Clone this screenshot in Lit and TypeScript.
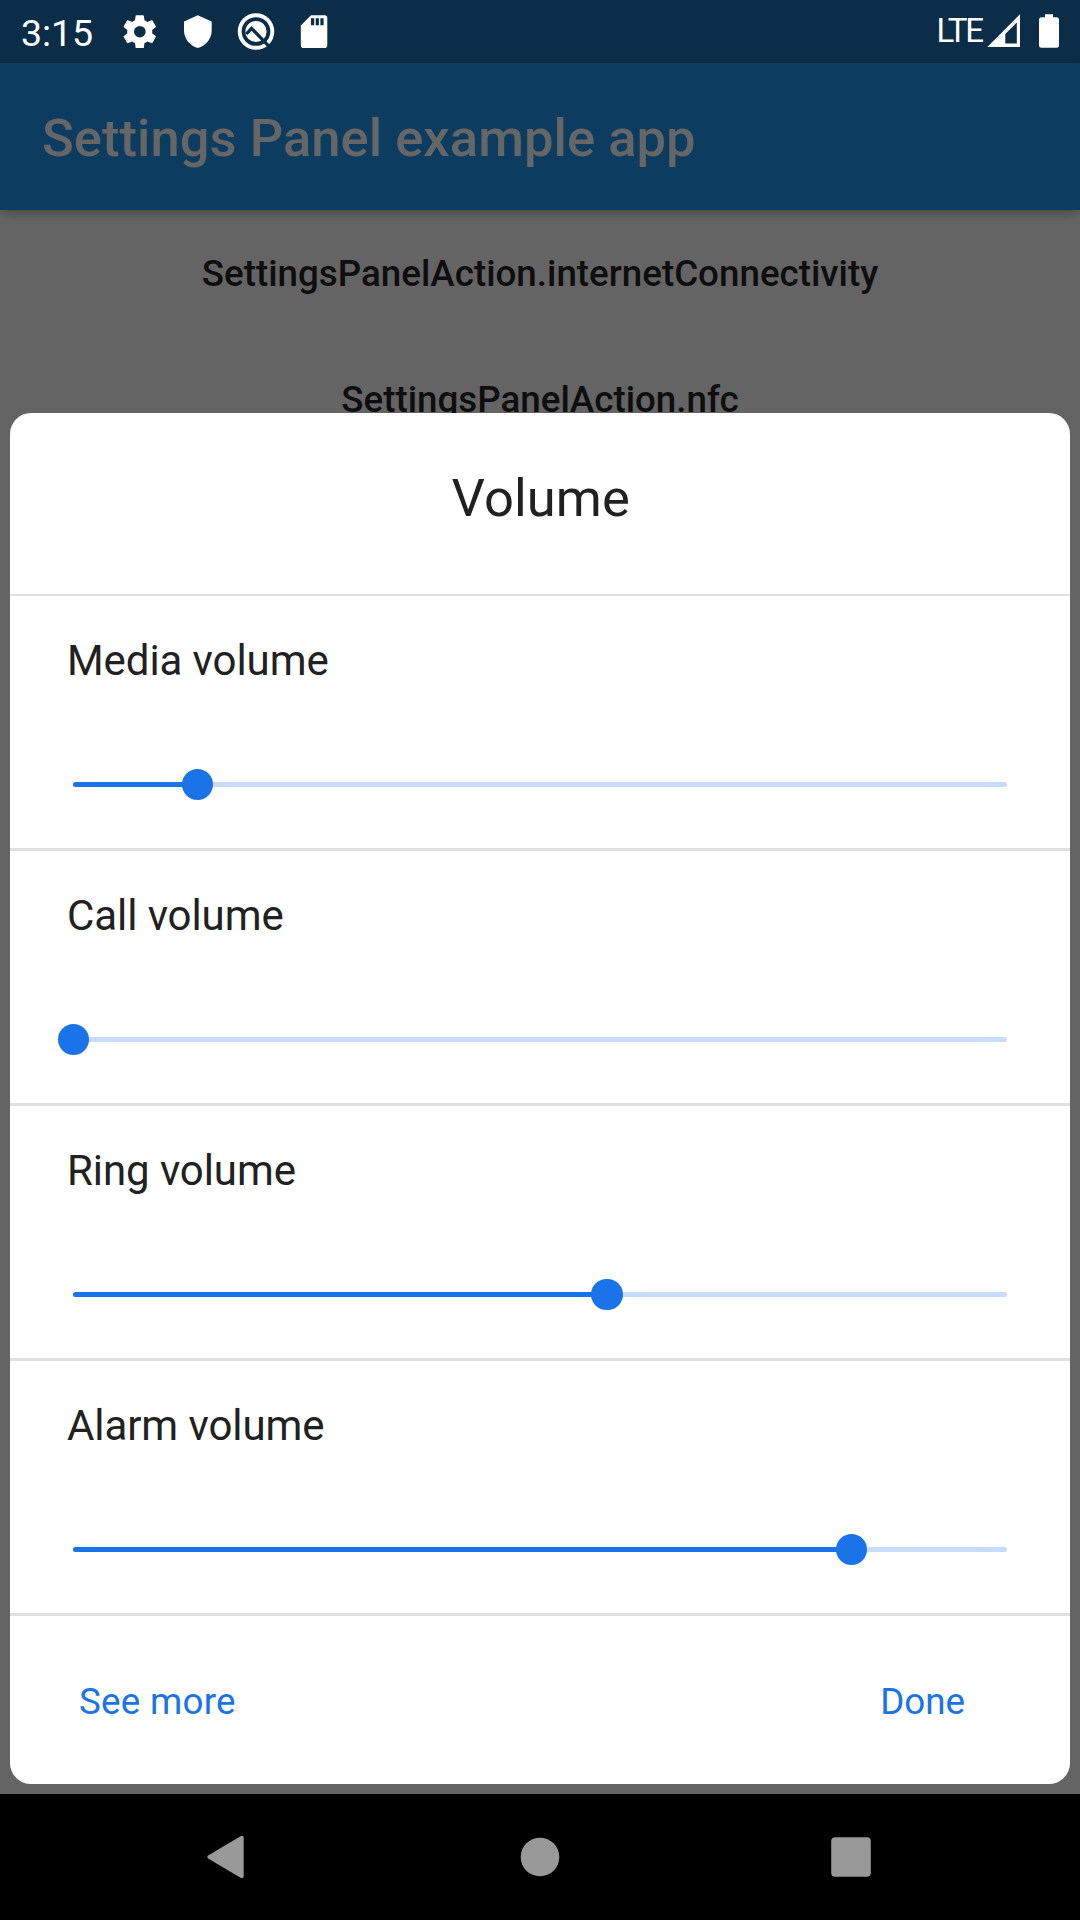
import { LitElement, html, css } from "lit";
import { customElement, property } from "lit/decorators.js";

@customElement("status-bar")
class StatusBar extends LitElement {
  static styles = css`
    :host { display: flex; align-items: flex-start; height: 63px; box-sizing: border-box; background: #0b2d48; color: #fff; }
    .clock { margin-left: 21px; width: 95px; font-size: 37.5px; line-height: 43px; padding-top: 12px; letter-spacing: -0.1px; }
    svg { display: block; fill: #fff; height: 63px; }
    .left { width: 220px; }
    .spacer { flex: 1; }
    .lte { width: 48.5px; font-size: 33px; line-height: 38px; padding-top: 12px; letter-spacing: -2.2px; white-space: nowrap; }
    .right { width: 95px; }
  `;
  render() {
    return html`
      <span class="clock">3:15</span>
      <svg class="left" viewBox="116 0 220 63">
        <g transform="translate(119.9 12) scale(1.66 1.64)">
          <path fill-rule="evenodd" d="M19.4 13c0-.3.1-.6.1-1s0-.7-.1-1l2.1-1.650c.2-.15.25-.4.1-.65l-2-3.450c-.1-.2-.4-.3-.6-.2l-2.500 1c-.5-.4-1.100-.7-1.700-1l-.35-2.650c0-.2-.25-.4-.5-.4h-4c-.25 0-.45.2-.5.4l-.35 2.650c-.6.25-1.150.6-1.700 1l-2.500-1c-.2-.1-.5 0-.6.2l-2 3.450c-.15.2-.1.5.1.65L4.500 11c0 .3-.1.7-.1 1s0 .7.1 1l-2.100 1.650c-.2.15-.25.4-.1.65l2 3.450c.1.2.4.3.6.2l2.500-1c.5.4 1.100.7 1.700 1l.35 2.650c.05.2.25.4.5.4h4c.25 0 .45-.2.5-.4l.35-2.650c.6-.25 1.150-.6 1.700-1l2.500 1c.2.1.5 0 .6-.2l2-3.450c.1-.2.05-.5-.1-.65zM12 15.500a3.500 3.500 0 1 1 0-7 3.500 3.500 0 0 1 0 7z"/>
        </g>
        <path d="M197.800 15.300 211.700 21.400V30.500C211.700 38.500 206 45.700 197.800 48 189.700 45.700 184 38.500 184 30.500V21.400Z"/>
        <circle cx="256" cy="31.500" r="16.300" fill="none" stroke="#fff" stroke-width="3.900"/>
        <circle cx="256" cy="31.500" r="10.600"/>
        <path d="M246.300 34 251.500 28.300 269.500 46.800" fill="none" stroke="#0b2d48" stroke-width="3.300"/>
        <path fill-rule="evenodd" d="M311 15.300H324.500Q327.300 15.300 327.300 18.100V45.200Q327.300 48 324.500 48H303.600Q300.800 48 300.800 45.200V25.500ZM311 18.300V25.300H314.200V18.300ZM315.700 18.300V25.300H318.900V18.300ZM320.400 18.300V25.300H323.600V18.300Z"/>
      </svg>
      <span class="spacer"></span>
      <span class="lte">LTE</span>
      <svg class="right" viewBox="985 0 95 63">
        <path fill-rule="evenodd" d="M987.300 47 1020 14.300V47ZM1005.300 43.500H1016.800V22.600L1005.300 34Z"/>
        <path d="M1045 14.300H1053V17.300H1056.500Q1059 17.300 1059 19.800V45.200Q1059 47.700 1056.500 47.700H1041.500Q1039 47.700 1039 45.200V19.800Q1039 17.300 1041.500 17.300H1045Z"/>
      </svg>
    `;
  }
}

@customElement("volume-row")
class VolumeRow extends LitElement {
  @property() label = "";
  @property({ type: Number }) value = 0;
  static styles = css`
    :host { display: flex; flex-direction: column; height: 255px; box-sizing: border-box; padding: 40px 63px 0 57px; border-bottom: 3px solid #e0e0e0; }
    .label { font-size: 42px; line-height: 49px; letter-spacing: -0.08px; color: #212121; }
    .track { position: relative; height: 5px; margin: 97px 0 0 6px; border-radius: 2.5px; background: #c6dcfa; }
    .fill { height: 5px; border-radius: 2.5px; background: #1a73e8; }
    .thumb { position: absolute; top: -13.2px; width: 31.4px; height: 31.4px; margin-left: -15.45px; border-radius: 50%; background: #1a73e8; }
  `;
  render() {
    const pct = `${this.value * 100}%`;
    return html`
      <span class="label">${this.label}</span>
      <div class="track">
        <div class="fill" style="width:${pct}"></div>
        <div class="thumb" style="left:${pct}"></div>
      </div>
    `;
  }
}

@customElement("app-root")
class AppRoot extends LitElement {
  static styles = css`
    :host { display: flex; flex-direction: column; position: relative; width: 1080px; height: 1920px; overflow: hidden; font-family: Roboto, "Liberation Sans", sans-serif; background: #646464; }
    .appbar { display: flex; align-items: center; height: 147px; box-sizing: border-box; padding: 2px 42px 0; background: #0d3c61; color: #666; font-size: 52.5px; font-weight: 500; letter-spacing: 0.04px; box-shadow: 0 5px 10px -2px rgba(0, 0, 0, 0.22), 0 1px 10px rgba(0, 0, 0, 0.1); z-index: 1; }
    .page { flex: 1; display: flex; flex-direction: column; align-items: center; }
    .action { display: flex; align-items: center; height: 126px; color: #0e0e0e; font-size: 36.75px; font-weight: 500; }
    .nav { display: block; height: 126px; background: #000; fill: #999; }
    .panel { position: absolute; left: 10px; top: 413px; width: 1060px; height: 1371px; display: flex; flex-direction: column; border-radius: 21px; background: #fff; z-index: 2; }
    .title { height: 183px; box-sizing: border-box; padding: 54px 0 0 1.5px; border-bottom: 2px solid #e0e0e0; text-align: center; font-size: 52.5px; line-height: 62px; letter-spacing: 0.1px; color: #212121; }
    .buttons { flex: 1; display: flex; justify-content: space-between; align-items: center; padding: 3px 105px 0 69px; font-size: 36.75px; color: #1a73e8; }
    .more { letter-spacing: 0.26px; }
  `;
  private streams = [
    { label: "Media volume", value: 2 / 15 },
    { label: "Call volume", value: 0 },
    { label: "Ring volume", value: 4 / 7 },
    { label: "Alarm volume", value: 5 / 6 },
  ];
  render() {
    return html`
      <status-bar></status-bar>
      <div class="appbar">Settings Panel example app</div>
      <div class="page">
        <div class="action">SettingsPanelAction.internetConnectivity</div>
        <div class="action">SettingsPanelAction.nfc</div>
      </div>
      <svg class="nav" viewBox="0 1794 1080 126">
        <path d="M208.500 1855.200 240.500 1836.200Q243.700 1835 243.700 1838.200V1875.800Q243.700 1879 240.500 1877.800L208.500 1858.800Q206 1857 208.500 1855.200Z"/>
        <circle cx="540" cy="1857" r="19.300"/>
        <rect x="831.200" y="1837.200" width="39.600" height="39.600" rx="4"/>
      </svg>
      <div class="panel">
        <div class="title">Volume</div>
        ${this.streams.map((s) => html`<volume-row .label=${s.label} .value=${s.value}></volume-row>`)}
        <div class="buttons"><span class="more">See more</span><span>Done</span></div>
      </div>
    `;
  }
}
